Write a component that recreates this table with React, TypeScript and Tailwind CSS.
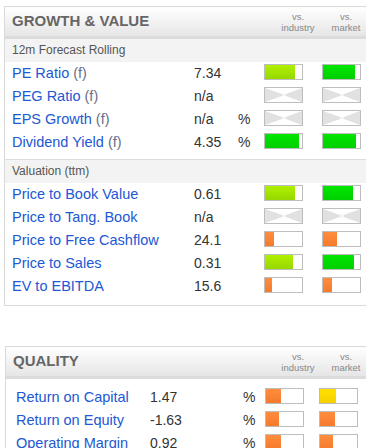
import React from 'react';

type Bar = { pct: number; color: 'lime' | 'green' | 'orange' | 'yellow' } | null;

type Row = { label: string; f?: boolean; value: string; unit?: string; ind: Bar; mkt: Bar };

const FILL: Record<string, string> = {
  lime: 'bg-gradient-to-b from-[#b0f000] to-[#96d800]',
  green: 'bg-gradient-to-b from-[#00e600] to-[#00d000]',
  orange: 'bg-gradient-to-b from-[#ff8d3e] to-[#f57a2c]',
  yellow: 'bg-gradient-to-b from-[#ffe000] to-[#f5d000]',
};

const FORECAST: Row[] = [
  { label: 'PE Ratio', f: true, value: '7.34', ind: { pct: 80, color: 'lime' }, mkt: { pct: 87, color: 'green' } },
  { label: 'PEG Ratio', f: true, value: 'n/a', ind: null, mkt: null },
  { label: 'EPS Growth', f: true, value: 'n/a', unit: '%', ind: null, mkt: null },
  { label: 'Dividend Yield', f: true, value: '4.35', unit: '%', ind: { pct: 92, color: 'green' }, mkt: { pct: 90, color: 'green' } },
];

const VALUATION: Row[] = [
  { label: 'Price to Book Value', value: '0.61', ind: { pct: 80, color: 'lime' }, mkt: { pct: 80, color: 'green' } },
  { label: 'Price to Tang. Book', value: 'n/a', ind: null, mkt: null },
  { label: 'Price to Free Cashflow', value: '24.1', ind: { pct: 25, color: 'orange' }, mkt: { pct: 37, color: 'orange' } },
  { label: 'Price to Sales', value: '0.31', ind: { pct: 77, color: 'lime' }, mkt: { pct: 85, color: 'green' } },
  { label: 'EV to EBITDA', value: '15.6', ind: { pct: 19, color: 'orange' }, mkt: { pct: 23, color: 'orange' } },
];

const QUALITY: Row[] = [
  { label: 'Return on Capital', value: '1.47', unit: '%', ind: { pct: 40, color: 'orange' }, mkt: { pct: 42, color: 'yellow' } },
  { label: 'Return on Equity', value: '-1.63', unit: '%', ind: { pct: 35, color: 'orange' }, mkt: { pct: 40, color: 'orange' } },
  { label: 'Operating Margin', value: '0.92', unit: '%', ind: { pct: 40, color: 'orange' }, mkt: { pct: 35, color: 'orange' } },
];

function Meter({ bar }: { bar: Bar }) {
  return (
    <div className="mt-[1px] h-[16px] w-[39px] border border-[#bdbdbd] bg-white flex">
      {bar ? (
        <div className={`h-full ${FILL[bar.color]}`} style={{ width: `${bar.pct}%` }} />
      ) : (
        <svg width="37" height="14" viewBox="0 0 37 14">
          <polygon points="0,0 17,6 17,8 0,14" fill="#e1e1e1" />
          <polygon points="37,0 21,6 21,8 37,14" fill="#e1e1e1" />
          <rect x="17" y="6.5" width="4" height="1" fill="#e8e8e8" />
        </svg>
      )}
    </div>
  );
}

function Header({ title, labelW }: { title: string; labelW: string }) {
  return (
    <div className="h-[32px] flex items-center bg-gradient-to-b from-white to-[#e6e6e6] border-b-[3px] border-[#dcdcdc]">
      <div className={`${labelW} pl-[7px] text-[15px] font-bold text-[#666]`}>{title}</div>
      <div className="w-[40px] text-center text-[9.5px] leading-[11px] text-[#888]">
        vs.<br />industry
      </div>
      <div className="w-[8px]" />
      <div className="w-[40px] text-center text-[9.5px] leading-[11px] text-[#888]">
        vs.<br />market
      </div>
    </div>
  );
}

function DataRow({ row, cols }: { row: Row; cols: { label: string; value: string; unit: string; gap: string } }) {
  return (
    <div className="h-[23px] flex items-start text-[14px] leading-[23px]">
      <div className={`${cols.label} text-[14.5px] text-[#2158d4] whitespace-nowrap`}>
        {row.label}
        {row.f && <span className="text-[#6a6f8a]"> (f)</span>}
      </div>
      <div className={`${cols.value} text-[#333]`}>{row.value}</div>
      <div className={`${cols.unit} text-[#333]`}>{row.unit ?? ''}</div>
      <div className="pt-[1px]">
        <Meter bar={row.ind} />
      </div>
      <div className={cols.gap} />
      <div className="pt-[1px]">
        <Meter bar={row.mkt} />
      </div>
    </div>
  );
}

const GV_COLS = { label: 'w-[182px] pl-[7px] box-content', value: 'w-[44px]', unit: 'w-[26px]', gap: 'w-[19px]' };
const Q_COLS = { label: 'w-[134px] pl-[10px] box-content', value: 'w-[93px]', unit: 'w-[22px]', gap: 'w-[15px]' };

export default function App() {
  return (
    <div className="w-[366px] h-[448px] overflow-hidden bg-white pt-[6px] font-['Liberation_Sans',Arial,sans-serif]">
      <div className="ml-[4px] w-[380px] border border-[#d9d9d9]">
        <Header title="GROWTH & VALUE" labelW="w-[273px]" />
        <div className="h-[23px] bg-[#f3f3f3] pl-[7px] text-[12px] leading-[23px] text-[#555]">
          12m Forecast Rolling
        </div>
        <div className="pb-[5px]">
          {FORECAST.map((r) => (
            <DataRow key={r.label} row={r} cols={GV_COLS} />
          ))}
        </div>
        <div className="h-[24px] bg-[#f3f3f3] border-t border-[#dcdcdc] pl-[7px] text-[12px] leading-[23px] text-[#555]">
          Valuation (ttm)
        </div>
        <div className="pb-[7px]">
          {VALUATION.map((r) => (
            <DataRow key={r.label} row={r} cols={GV_COLS} />
          ))}
        </div>
      </div>

      <div className="ml-[5px] mt-[40px] w-[380px] border border-[#d9d9d9]">
        <Header title="QUALITY" labelW="w-[272px]" />
        <div className="pt-[7px]">
          {QUALITY.map((r) => (
            <DataRow key={r.label} row={r} cols={Q_COLS} />
          ))}
        </div>
      </div>
    </div>
  );
}
